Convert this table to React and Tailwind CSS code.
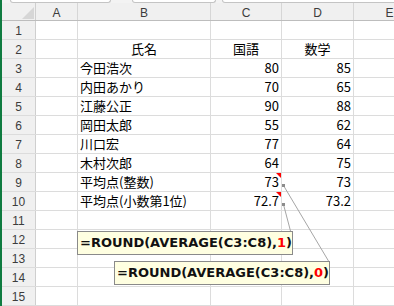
import React from "react";

const rows = [
  { n: 1 },
  { n: 2, b: "氏名", c: "国語", d: "数学", head: true },
  { n: 3, b: "今田浩次", c: "80", d: "85" },
  { n: 4, b: "内田あかり", c: "70", d: "65" },
  { n: 5, b: "江藤公正", c: "90", d: "88" },
  { n: 6, b: "岡田太郎", c: "55", d: "62" },
  { n: 7, b: "川口宏", c: "77", d: "64" },
  { n: 8, b: "木村次郎", c: "64", d: "75" },
  { n: 9, b: "平均点(整数)", c: "73", d: "73" },
  { n: 10, b: "平均点(小数第1位)", c: "72.7", d: "73.2" },
  { n: 11 },
  { n: 12 },
  { n: 13 },
  { n: 14 },
  { n: 15 },
];

const cellFont = { fontFamily: '"Noto Sans CJK JP", "Noto Sans", sans-serif' };

function Row({ r }) {
  const align = r.head ? "justify-center" : "justify-end pr-[2px]";
  return (
    <div className="flex h-[19px] border-b border-[#dcdcdc]">
      <div className="w-[34px] shrink-0 flex items-center justify-center pt-[2px] bg-[#f0f0f0] border-r border-[#cfcfcf] text-[12px] text-[#3c3c3c]" style={{ fontFamily: '"Liberation Sans", sans-serif' }}>
        {r.n}
      </div>
      <div className="w-[42px] shrink-0 border-r border-[#dcdcdc]" />
      <div className={`w-[133px] shrink-0 border-r border-[#dcdcdc] flex items-end pb-[1px] text-[13px] leading-[16px] text-black whitespace-nowrap ${r.head ? "justify-center" : "pl-[2px]"}`} style={cellFont}>
        {r.b}
      </div>
      <div className={`relative w-[71px] shrink-0 border-r border-[#dcdcdc] flex items-end pb-[1px] text-[13px] leading-[16px] text-black ${align}`} style={cellFont}>
        {r.c}
        {(r.n === 9 || r.n === 10) && (
          <span className="absolute right-0 top-0 w-0 h-0 border-t-[5px] border-t-[#ff0000] border-l-[5px] border-l-transparent" />
        )}
      </div>
      <div className={`w-[72px] shrink-0 border-r border-[#dcdcdc] flex items-end pb-[1px] text-[13px] leading-[16px] text-black ${align}`} style={cellFont}>
        {r.d}
      </div>
      <div className="w-[72px] shrink-0 border-r border-[#dcdcdc]" />
    </div>
  );
}

function Callout({ className, digit }) {
  return (
    <div className={`absolute w-[216px] h-[24px] bg-[#ffffe1] border border-[#8a8a8a] flex items-center pl-[2px] text-[13px] font-bold text-[#111] whitespace-nowrap ${className}`} style={{ fontFamily: '"DejaVu Sans", sans-serif' }}>
      =ROUND(AVERAGE(C3:C8),<span className="text-[#ff0000]">{digit}</span>)
    </div>
  );
}

export default function App() {
  return (
    <div className="relative w-[394px] h-[306px] overflow-hidden bg-white flex">
      <div className="w-[2px] shrink-0 bg-[#107c41]" />
      <div className="flex flex-col">
        <div className="h-[11px] bg-[#f3f3f3] flex items-start">
          <div className="ml-[8px] w-[101px] h-[3px] bg-white border border-t-0 border-[#c4c4c4] rounded-b-[4px]" />
          <div className="ml-[21px] w-[84px] h-[3px] bg-white border border-t-0 border-[#c4c4c4] rounded-b-[4px]" />
          <div className="ml-[6px] w-[200px] h-[3px] bg-white border border-t-0 border-[#c4c4c4] rounded-bl-[4px]" />
        </div>
        <div className="flex h-[18px] bg-[#f0f0f0] border-b border-[#bdbdbd] text-[12px] text-[#3c3c3c]" style={{ fontFamily: '"Liberation Sans", sans-serif' }}>
          <div className="relative w-[34px] shrink-0 border-r border-[#cfcfcf]">
            <svg className="absolute right-[1px] bottom-[1px]" width="12" height="12" viewBox="0 0 12 12">
              <polygon points="12,0 12,12 0,12" fill="#d6d6d6" />
            </svg>
          </div>
          {[["A", 42], ["B", 133], ["C", 71], ["D", 72], ["E", 72]].map(([l, w]) => (
            <div key={l} className="shrink-0 border-r border-[#d6d6d6] flex items-center justify-center pt-[2px]" style={{ width: w }}>
              {l}
            </div>
          ))}
        </div>
        {rows.map((r) => (
          <Row key={r.n} r={r} />
        ))}
      </div>

      <svg className="absolute left-0 top-0 pointer-events-none" width="394" height="306">
        <line x1="283.5" y1="185.5" x2="328.5" y2="261" stroke="#a6a6a6" strokeWidth="1" />
        <line x1="283.5" y1="204.5" x2="290.5" y2="231" stroke="#a6a6a6" strokeWidth="1" />
        <rect x="282" y="184" width="3" height="3" fill="#8c8c8c" />
        <rect x="282" y="203" width="3" height="3" fill="#8c8c8c" />
      </svg>

      <Callout className="left-[77px] top-[231px]" digit="1" />
      <Callout className="left-[114px] top-[261px]" digit="0" />
    </div>
  );
}
